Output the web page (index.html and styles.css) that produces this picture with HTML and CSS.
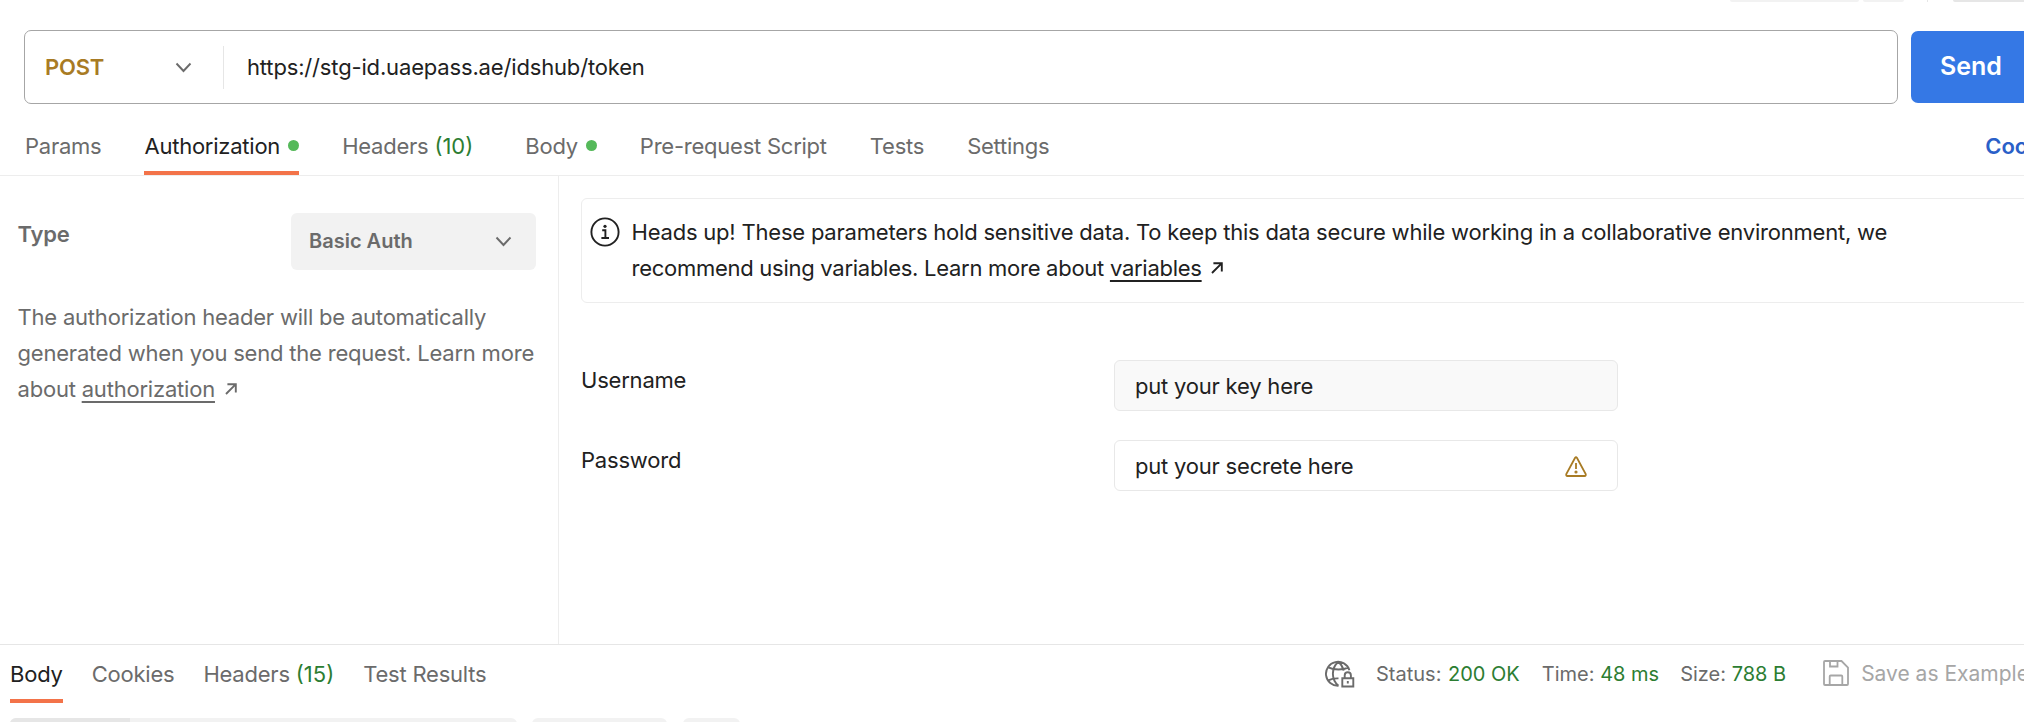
FILE: index.html
```html
<!DOCTYPE html>
<html lang="en">
<head>
<meta charset="utf-8">
<title>POST request</title>
<link rel="stylesheet" href="styles.css">
</head>
<body>
<div class="app">
  <div class="toolbar-edge"><i class="edge e1"></i><i class="edge e2"></i><i class="edge-line"></i><i class="edge e3"></i></div>
  <div class="request-row">
    <div class="url-box">
      <div class="method"><span>POST</span>
        <svg class="chevron" width="17" height="11" viewBox="0 0 17 11"><path d="M1.5 1.5 8.5 9 15.5 1.5"/></svg>
      </div>
      <div class="url">https://stg-id.uaepass.ae/idshub/token</div>
    </div>
    <button class="send">Send</button>
  </div>
  <nav class="tabs">
    <a class="tab t-params">Params</a>
    <a class="tab t-auth active"><span>Authorization</span><i class="dot"></i></a>
    <a class="tab t-headers"><span>Headers</span><b class="count">(10)</b></a>
    <a class="tab t-body"><span>Body</span><i class="dot"></i></a>
    <a class="tab t-pre">Pre-request Script</a>
    <a class="tab t-tests">Tests</a>
    <a class="tab">Settings</a>
    <a class="cookies-link">Cookies</a>
  </nav>
  <main class="auth">
    <aside class="auth-type">
      <div class="type-row">
        <span class="type-label">Type</span>
        <div class="select"><span>Basic Auth</span>
          <svg class="chevron" width="17" height="11" viewBox="0 0 17 11"><path d="M1.5 1.5 8.5 9 15.5 1.5"/></svg>
        </div>
      </div>
      <p class="help">The authorization header will be automatically<br>generated when you send the request. Learn more<br>about <a class="link">authorization</a><svg class="arrow" width="12" height="12" viewBox="0 0 12 12"><path d="M1 11 10.6 1.4M2.4 1.2H10.8V9.6"/></svg></p>
    </aside>
    <section class="auth-form">
      <div class="alert">
        <svg class="info" width="30" height="30" viewBox="0 0 30 30"><circle cx="15" cy="15" r="13.6"/><path d="M12.2 13.2H15.4V21M11.4 21H19"/><circle class="fill" cx="15" cy="9.3" r="1.6"/></svg>
        <p class="alert-text">Heads up! These parameters hold sensitive data. To keep this data secure while working in a collaborative environment, we<br><span class="alert-more">recommend using variables. Learn more about <a class="link">variables</a></span><svg class="arrow" width="12" height="12" viewBox="0 0 12 12"><path d="M1 11 10.6 1.4M2.4 1.2H10.8V9.6"/></svg></p>
      </div>
      <div class="field"><label>Username</label><div class="input shaded"><span>put your key here</span></div></div>
      <div class="field"><label>Password</label><div class="input"><span>put your secrete here</span>
        <svg class="warn" width="22" height="21" viewBox="0 0 22 21"><path d="M10.1 1.7Q11 .4 11.9 1.7L20.7 18Q21.2 19.9 19.5 20H2.5Q.8 19.9 1.3 18Z"/><path d="M11 7V13"/><circle cx="11" cy="16" r=".7"/></svg>
      </div></div>
    </section>
  </main>
  <footer class="response">
    <div class="response-bar">
      <nav class="response-tabs">
        <a class="tab active">Body</a>
        <a class="tab">Cookies</a>
        <a class="tab"><span>Headers</span><b class="count">(15)</b></a>
        <a class="tab">Test Results</a>
      </nav>
      <div class="meta">
        <svg class="globe" width="30" height="28" viewBox="0 0 30 28"><path d="M13.5 25.8A12 12 0 1 1 24.4 10.2M13.5 1.8C6 8 6 19.6 13.5 25.8M13.5 1.8C16.3 4.4 17.9 7.4 18.6 10.6M3.3 7.3C9 10.2 18 10.2 23.7 7.3M3.3 20.3C6.3 18.8 9.8 18.2 13.5 18.4"/><path d="M17.3 18.2H28.3V26.5H17.3ZM19.7 18V15.4a3.1 3.1 0 0 1 6.2 0V18M22.8 21V23.6"/></svg>
        <span class="stat s1">Status: <em>200 OK</em></span>
        <span class="stat s2">Time: <em>48 ms</em></span>
        <span class="stat s3">Size: <em>788 B</em></span>
        <span class="save"><svg class="floppy" width="26" height="26" viewBox="0 0 26 26"><path d="M1 2Q1 1 2 1H18.5L25 7.5V24Q25 25 24 25H2Q1 25 1 24ZM7 1V6.5H14.5V1M6.7 25V16.5Q6.7 15.5 7.7 15.5H18.3Q19.3 15.5 19.3 16.5V25"/></svg><span>Save as Example</span></span>
      </div>
    </div>
    <div class="view-row"><div class="seg"><i></i></div><div class="pill p1"></div><div class="pill p2"></div></div>
  </footer>
</div>
</body>
</html>
```

FILE: styles.css
```css
* { box-sizing: border-box; }
html, body { margin: 0; overflow: hidden; }
body { background: #fff; font-family: Inter, "Liberation Sans", sans-serif; font-size: 22px; letter-spacing: -0.205px; color: #212121; }
.app { width: 2024px; height: 722px; overflow: hidden; display: flex; flex-direction: column; }
svg { fill: none; flex: none; display: block; }
a { color: inherit; text-decoration: none; }
p { margin: 0; }

.toolbar-edge { height: 30px; display: flex; padding-left: 1730px; flex: none; }
.edge { height: 2px; flex: none; background: #f2f2f2; border-radius: 0 0 4px 4px; }
.e1 { width: 129px; margin-right: 4px; }
.e2 { width: 41px; margin-right: 23px; }
.edge-line { width: 1px; height: 2px; flex: none; background: #e6e6e6; margin-right: 25px; }
.e3 { width: 80px; background: #e6e6e6; }

.request-row { display: flex; align-items: center; height: 74px; padding-left: 24px; gap: 13px; flex: none; }
.url-box { width: 1874px; height: 74px; border: 1px solid #a6a6a6; border-radius: 7px; display: flex; align-items: center; flex: none; }
.method { width: 199px; height: 43px; border-right: 1px solid #e6e6e6; display: flex; align-items: center; padding: 0 31px 0 20px; justify-content: space-between; color: #a87b24; font-weight: 600; }
.chevron { stroke: #6b6b6b; stroke-width: 1.9; }
.url { padding-left: 23px; letter-spacing: -0.16px; }
.send { width: 200px; height: 72px; flex: none; border: 0; border-radius: 7px; background: #3578e5; color: #fff; font: 600 25px Inter, sans-serif; text-align: left; padding: 0 0 2px 29px; }

.tabs { display: flex; height: 72px; border-bottom: 1px solid #ededed; padding: 13px 0 0 25px; flex: none; letter-spacing: -0.24px; }
.tab { display: flex; align-items: center; height: 58px; color: #6b6b6b; flex: none; white-space: nowrap; gap: 8px; padding-bottom: 1px; }
.tabs .tab { margin-right: 43px; }
.tabs .tab.t-headers { margin-right: 52px; }
.tab.active { color: #212121; border-bottom: 4px solid #f37349; padding: 3px 0 0; }
.dot { width: 11px; height: 11px; border-radius: 50%; background: #55b95a; }
.count { font-weight: 400; color: #2c7d32; margin-left: -2px; letter-spacing: 0; }
.cookies-link { margin-left: auto; margin-right: -47px; height: 58px; line-height: 58px; color: #2a60c8; font-weight: 600; letter-spacing: -0.1px; }

.auth { display: flex; height: 468px; flex: none; }
.auth-type { width: 559px; border-right: 1px solid #ededed; padding: 37px 22px 0 17.5px; flex: none; color: #6b6b6b; }
.type-row { display: flex; justify-content: space-between; height: 57px; }
.type-label { font-weight: 600; line-height: 42px; }
.select { width: 245px; height: 57px; background: #f2f2f2; border-radius: 6px; display: flex; justify-content: space-between; align-items: center; padding: 0 24px 1px 18px; font-weight: 600; font-size: 20px; letter-spacing: 0; }
.help { margin-top: 29px; line-height: 36px; white-space: nowrap; }
.link { text-decoration: underline 2px; text-underline-offset: 4px; text-decoration-skip-ink: none; }
.arrow { display: inline-block; margin-left: 10px; stroke: currentColor; stroke-width: 1.9; vertical-align: 2px; }

.auth-form { padding: 22px 0 0 22px; flex: none; }
.alert { width: 1600px; height: 105px; border: 1px solid #ededed; border-radius: 6px; display: flex; padding: 15px 0 0 8px; margin-bottom: 57px; }
.info { stroke: #212121; stroke-width: 1.9; margin: 3px 11.5px 0 0; }
.info .fill { fill: #212121; stroke: none; }
.alert-text { line-height: 36px; white-space: nowrap; }
.alert-more { letter-spacing: -0.27px; }
.alert .arrow { margin-left: 9px; }
.field { display: flex; height: 51px; margin-bottom: 29px; }
.field label { width: 533px; line-height: 40px; }
.input { width: 504px; height: 51px; border: 1px solid #e8e8e8; border-radius: 6px; padding: 0 30px 0 20px; display: flex; justify-content: space-between; align-items: center; }
.input.shaded { background: #f9f9f9; }
.warn { stroke: #a87b24; stroke-width: 1.8; margin-top: 1px; }

.response { height: 78px; border-top: 1px solid #e6e6e6; flex: none; }
.response-bar { display: flex; height: 73px; }
.response-tabs { display: flex; gap: 29px; padding-left: 10px; width: 1325px; flex: none; letter-spacing: -0.22px; }
.response-tabs .tab { height: 58px; padding-bottom: 0; }
.response-tabs .tab.active { height: 58px; padding-top: 4px; }
.meta { display: flex; height: 58px; align-items: center; white-space: nowrap; font-size: 20px; letter-spacing: 0; color: #6b6b6b; }
.globe { stroke: #6b6b6b; stroke-width: 1.9; margin-right: 21px; }
.stat { margin-right: 22px; }
.stat em { font-style: normal; color: #2c7d32; }
.s1 em { margin-left: 1px; }
.s2 { margin-right: 21px; }
.s3 { margin-right: 37px; }
.save { display: flex; align-items: center; gap: 12px; color: #a6a6a6; font-size: 21px; padding-bottom: 2px; }
.floppy { stroke: #a6a6a6; stroke-width: 1.8; }
.view-row { display: flex; padding-left: 10px; height: 20px; }
.seg { width: 507px; background: #f2f2f2; border-radius: 6px; margin-right: 15px; overflow: hidden; }
.seg i { display: block; width: 120px; height: 20px; background: #e6e6e6; }
.pill { background: #f2f2f2; border-radius: 6px; }
.p1 { width: 135px; margin-right: 16px; }
.p2 { width: 57px; }
```
